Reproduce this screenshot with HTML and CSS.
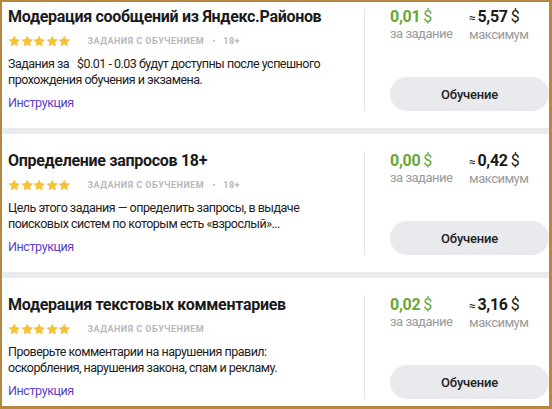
FILE: index.html
```html
<!DOCTYPE html>
<html lang="ru">
<head>
  <meta charset="UTF-8" />
  <meta name="viewport" content="width=device-width, initial-scale=1.0"/>
  <title>Задания</title>
  <link rel="stylesheet" href="styles.css">
</head>
<body>
  <div class="frame">
    <div class="list">

      <div class="task">
        <div class="task-main">
          <div class="task-title">Модерация сообщений из Яндекс.Районов</div>
          <div class="task-meta">
            <span class="stars">
              <svg viewBox="0 0 24 24"><path d="M12 .8l3.4 7.1 7.8 1-5.7 5.4 1.4 7.7L12 18.3l-6.9 3.7 1.4-7.7L.8 8.9l7.8-1z"/></svg>
              <svg viewBox="0 0 24 24"><path d="M12 .8l3.4 7.1 7.8 1-5.7 5.4 1.4 7.7L12 18.3l-6.9 3.7 1.4-7.7L.8 8.9l7.8-1z"/></svg>
              <svg viewBox="0 0 24 24"><path d="M12 .8l3.4 7.1 7.8 1-5.7 5.4 1.4 7.7L12 18.3l-6.9 3.7 1.4-7.7L.8 8.9l7.8-1z"/></svg>
              <svg viewBox="0 0 24 24"><path d="M12 .8l3.4 7.1 7.8 1-5.7 5.4 1.4 7.7L12 18.3l-6.9 3.7 1.4-7.7L.8 8.9l7.8-1z"/></svg>
              <svg viewBox="0 0 24 24"><path d="M12 .8l3.4 7.1 7.8 1-5.7 5.4 1.4 7.7L12 18.3l-6.9 3.7 1.4-7.7L.8 8.9l7.8-1z"/></svg>
            </span>
            <span class="tag">Задания с обучением</span>
            <span class="dot">•</span>
            <span class="tag">18+</span>
          </div>
          <p class="task-desc">Задания за&nbsp;&nbsp; $0.01 - 0.03 будут доступны после успешного прохождения обучения и экзамена.</p>
          <a class="task-link" href="#">Инструкция</a>
        </div>
        <div class="task-side">
          <div class="stats">
            <div class="stat">
              <div class="stat-value green">0,01<span class="cur">$</span></div>
              <div class="stat-label">за задание</div>
            </div>
            <div class="stat">
              <div class="stat-value"><span class="approx">≈</span>5,57<span class="cur">$</span></div>
              <div class="stat-label">максимум</div>
            </div>
          </div>
          <button class="btn">Обучение</button>
        </div>
      </div>

      <div class="task">
        <div class="task-main">
          <div class="task-title">Определение запросов 18+</div>
          <div class="task-meta">
            <span class="stars">
              <svg viewBox="0 0 24 24"><path d="M12 .8l3.4 7.1 7.8 1-5.7 5.4 1.4 7.7L12 18.3l-6.9 3.7 1.4-7.7L.8 8.9l7.8-1z"/></svg>
              <svg viewBox="0 0 24 24"><path d="M12 .8l3.4 7.1 7.8 1-5.7 5.4 1.4 7.7L12 18.3l-6.9 3.7 1.4-7.7L.8 8.9l7.8-1z"/></svg>
              <svg viewBox="0 0 24 24"><path d="M12 .8l3.4 7.1 7.8 1-5.7 5.4 1.4 7.7L12 18.3l-6.9 3.7 1.4-7.7L.8 8.9l7.8-1z"/></svg>
              <svg viewBox="0 0 24 24"><path d="M12 .8l3.4 7.1 7.8 1-5.7 5.4 1.4 7.7L12 18.3l-6.9 3.7 1.4-7.7L.8 8.9l7.8-1z"/></svg>
              <svg viewBox="0 0 24 24"><path d="M12 .8l3.4 7.1 7.8 1-5.7 5.4 1.4 7.7L12 18.3l-6.9 3.7 1.4-7.7L.8 8.9l7.8-1z"/></svg>
            </span>
            <span class="tag">Задания с обучением</span>
            <span class="dot">•</span>
            <span class="tag">18+</span>
          </div>
          <p class="task-desc">Цель этого задания — определить запросы, в выдаче поисковых систем по которым есть «взрослый»...</p>
          <a class="task-link" href="#">Инструкция</a>
        </div>
        <div class="task-side">
          <div class="stats">
            <div class="stat">
              <div class="stat-value green">0,00<span class="cur">$</span></div>
              <div class="stat-label">за задание</div>
            </div>
            <div class="stat">
              <div class="stat-value"><span class="approx">≈</span>0,42<span class="cur">$</span></div>
              <div class="stat-label">максимум</div>
            </div>
          </div>
          <button class="btn">Обучение</button>
        </div>
      </div>

      <div class="task">
        <div class="task-main">
          <div class="task-title">Модерация текстовых комментариев</div>
          <div class="task-meta">
            <span class="stars">
              <svg viewBox="0 0 24 24"><path d="M12 .8l3.4 7.1 7.8 1-5.7 5.4 1.4 7.7L12 18.3l-6.9 3.7 1.4-7.7L.8 8.9l7.8-1z"/></svg>
              <svg viewBox="0 0 24 24"><path d="M12 .8l3.4 7.1 7.8 1-5.7 5.4 1.4 7.7L12 18.3l-6.9 3.7 1.4-7.7L.8 8.9l7.8-1z"/></svg>
              <svg viewBox="0 0 24 24"><path d="M12 .8l3.4 7.1 7.8 1-5.7 5.4 1.4 7.7L12 18.3l-6.9 3.7 1.4-7.7L.8 8.9l7.8-1z"/></svg>
              <svg viewBox="0 0 24 24"><path d="M12 .8l3.4 7.1 7.8 1-5.7 5.4 1.4 7.7L12 18.3l-6.9 3.7 1.4-7.7L.8 8.9l7.8-1z"/></svg>
              <svg viewBox="0 0 24 24"><path d="M12 .8l3.4 7.1 7.8 1-5.7 5.4 1.4 7.7L12 18.3l-6.9 3.7 1.4-7.7L.8 8.9l7.8-1z"/></svg>
            </span>
            <span class="tag">Задания с обучением</span>
          </div>
          <p class="task-desc">Проверьте комментарии на нарушения правил: оскорбления, нарушения закона, спам и рекламу.</p>
          <a class="task-link" href="#">Инструкция</a>
        </div>
        <div class="task-side">
          <div class="stats">
            <div class="stat">
              <div class="stat-value green">0,02<span class="cur">$</span></div>
              <div class="stat-label">за задание</div>
            </div>
            <div class="stat">
              <div class="stat-value"><span class="approx">≈</span>3,16<span class="cur">$</span></div>
              <div class="stat-label">максимум</div>
            </div>
          </div>
          <button class="btn">Обучение</button>
        </div>
      </div>

    </div>
  </div>
</body>
</html>
```

FILE: styles.css
```css
body {
  margin: 0;
  font-family: Roboto, "Noto Sans", sans-serif;
  color: #1f1f1f;
  background-color: #fff;
}
.frame {
  width: 552px;
  height: 409px;
  box-sizing: border-box;
  border-style: solid;
  border-color: #b5873f;
  border-width: 2px 3px 3px 2px;
  overflow: hidden;
  background-color: #e8eaed;
}
.list {
  display: flex;
  flex-direction: column;
  gap: 6px;
  margin-top: -12px;
}
.task {
  display: grid;
  grid-template-columns: 1fr 185px;
  background-color: #fff;
  padding: 17px 0 17px 6px;
}
.task-main {
  padding-right: 30px;
}
.task-title {
  font-size: 16px;
  line-height: 20px;
  font-weight: bold;
  letter-spacing: -0.3px;
  color: #1a1a1a;
  white-space: nowrap;
}
.task-meta {
  display: flex;
  align-items: center;
  height: 14px;
  margin-top: 7px;
}
.stars {
  display: flex;
  margin-right: 17px;
}
.stars svg {
  width: 12.5px;
  height: 12.5px;
  fill: #f5c33b;
}
.tag {
  font-size: 9px;
  font-weight: bold;
  letter-spacing: 0.5px;
  text-transform: uppercase;
  color: #b5b9bf;
}
.dot {
  font-size: 9px;
  color: #b5b9bf;
  margin: 0 8px;
}
.task-desc {
  margin: 8px 0 0;
  font-size: 12.5px;
  line-height: 16px;
  letter-spacing: -0.5px;
  color: #222;
}
.task-link {
  display: block;
  margin-top: 7px;
  font-size: 12.5px;
  line-height: 16px;
  letter-spacing: -0.4px;
  color: #5a3fc6;
  text-decoration: none;
}
.task-side {
  display: flex;
  flex-direction: column;
  border-left: 1px solid #e6e6e6;
  padding-left: 25px;
}
.stats {
  display: flex;
}
.stat {
  width: 79px;
}
.stat-value {
  font-size: 16px;
  line-height: 20px;
  font-weight: bold;
  letter-spacing: -0.3px;
  color: #1a1a1a;
}
.stat-value.green {
  color: #6aa637;
}
.cur {
  font-weight: normal;
  margin-left: 3px;
}
.approx {
  font-size: 12px;
  font-weight: normal;
  margin-right: 2px;
}
.stat-label {
  font-size: 13px;
  line-height: 14px;
  letter-spacing: -0.5px;
  color: #9a9a9a;
}
.btn {
  margin-top: auto;
  height: 34px;
  border: none;
  border-radius: 17px;
  background-color: #e8eaed;
  font-family: inherit;
  font-size: 13px;
  font-weight: 500;
  letter-spacing: -0.2px;
  color: #222;
  cursor: pointer;
}
```
